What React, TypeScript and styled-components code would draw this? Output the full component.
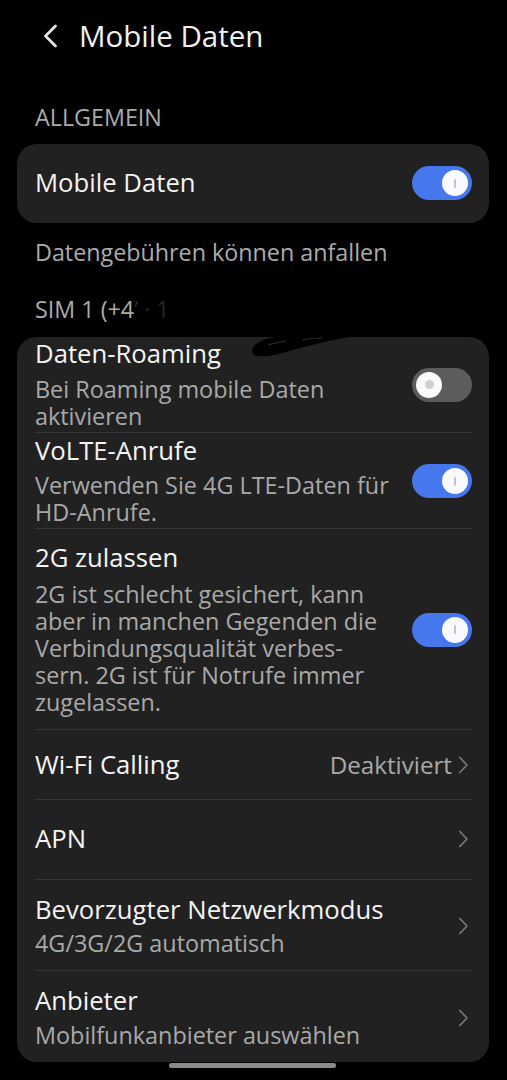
import styled, { createGlobalStyle } from "styled-components";

const GlobalStyle = createGlobalStyle`
  html, body {
    margin: 0;
    padding: 0;
    background: #000;
  }
  body {
    font-family: "Open Sans", "Noto Sans", sans-serif;
    -webkit-font-smoothing: antialiased;
  }
`;

const Page = styled.div`
  width: 507px;
  height: 1080px;
  box-sizing: border-box;
  padding: 0 18px 0 17px;
  background: #000;
  color: #f2f2f2;
  display: flex;
  flex-direction: column;
  overflow: hidden;
`;

const Header = styled.header`
  height: 72px;
  display: flex;
  align-items: center;
  gap: 20px;
  padding-left: 25px;
`;

const HeaderTitle = styled.h1`
  margin: 0;
  font-size: 29.5px;
  font-weight: 500;
  color: #f0f0f0;
  line-height: 1;
`;

const SectionLabel = styled.div<{ $top: number }>`
  margin-top: ${(p) => p.$top}px;
  padding-left: 18px;
  font-size: 23.3px;
  line-height: 30px;
  color: #ababab;
  position: relative;
`;

const Card = styled.section<{ $top: number }>`
  margin-top: ${(p) => p.$top}px;
  background: #212121;
  border-radius: 20px;
  padding: 0 17px 0 18px;
  display: flex;
  flex-direction: column;
`;

const Row = styled.div<{ $top: number; $bottom: number; $first?: boolean }>`
  display: flex;
  align-items: center;
  gap: 12px;
  padding: ${(p) => p.$top}px 0 ${(p) => p.$bottom}px;
  border-top: ${(p) => (p.$first ? "none" : "1px solid #363636")};
`;

const RowText = styled.div`
  flex: 1;
  min-width: 0;
  display: flex;
  flex-direction: column;
`;

const Title = styled.div`
  font-size: 25.7px;
  line-height: 30px;
  color: #f4f4f4;
  white-space: nowrap;
`;

const Sub = styled.div<{ $gap: number }>`
  margin-top: ${(p) => p.$gap}px;
  font-size: 23.4px;
  line-height: 27px;
  color: #a9a9a9;
  white-space: nowrap;
`;

const Value = styled.span`
  font-size: 24.2px;
  line-height: 30px;
  color: #a9a9a9;
`;

const Trailing = styled.div`
  display: flex;
  align-items: center;
  gap: 6px;
`;

const Track = styled.div<{ $on: boolean }>`
  width: 60px;
  height: 34px;
  box-sizing: border-box;
  border-radius: 17px;
  background: ${(p) => (p.$on ? "#4677ec" : "#5c5c5c")};
  display: flex;
  align-items: center;
  justify-content: ${(p) => (p.$on ? "flex-end" : "flex-start")};
  padding: 0 4px;
  flex-shrink: 0;
`;

const Thumb = styled.div`
  width: 26px;
  height: 26px;
  border-radius: 50%;
  background: #fafafa;
  display: grid;
  place-items: center;
`;

const OnMark = styled.div`
  width: 2px;
  height: 9px;
  border-radius: 1px;
  background: #b9c3dc;
`;

const OffMark = styled.div`
  width: 9px;
  height: 9px;
  border-radius: 50%;
  background: #cfcfcf;
`;

const Faint = styled.span`
  color: #262626;
`;

const Scribble = styled.svg`
  position: absolute;
  left: 233px;
  top: 30px;
  z-index: 2;
`;

const ChevronIcon = styled.svg`
  margin-right: 3px;
  flex-shrink: 0;
`;

const HomeBar = styled.div`
  align-self: center;
  margin: 1px 0 0 -1px;
  width: 167px;
  height: 5px;
  border-radius: 3px;
  background: #8a8a8a;
`;

const Toggle = ({ on }: { on: boolean }) => (
  <Track $on={on}>
    <Thumb>{on ? <OnMark /> : <OffMark />}</Thumb>
  </Track>
);

const Chevron = () => (
  <ChevronIcon width="11" height="18" viewBox="0 0 11 18">
    <path
      d="M1.8 1.5 L9 9 L1.8 16.5"
      fill="none"
      stroke="#7a7a7a"
      strokeWidth="1.7"
      strokeLinecap="round"
      strokeLinejoin="round"
    />
  </ChevronIcon>
);

const BackIcon = () => (
  <svg width="17" height="24" viewBox="0 0 17 24">
    <path
      d="M13.5 2 L3.5 12 L13.5 22"
      fill="none"
      stroke="#e6e6e6"
      strokeWidth="2.8"
      strokeLinecap="round"
      strokeLinejoin="round"
    />
  </svg>
);

const App = () => (
  <>
    <GlobalStyle />
    <Page>
      <Header>
        <BackIcon />
        <HeaderTitle>Mobile Daten</HeaderTitle>
      </Header>

      <SectionLabel $top={30}>ALLGEMEIN</SectionLabel>

      <Card $top={12}>
        <Row $first $top={22} $bottom={23}>
          <RowText>
            <Title>Mobile Daten</Title>
          </RowText>
          <Trailing>
            <Toggle on />
          </Trailing>
        </Row>
      </Card>

      <SectionLabel $top={14}>Datengebühren können anfallen</SectionLabel>

      <SectionLabel $top={27}>
        SIM 1 (+4<Faint>ʼ · 1</Faint>
        <Scribble width="110" height="36" viewBox="0 0 110 36">
          <path
            d="M3 30 C0 26 4 19 16 15 C40 9 70 7 104 6 L104 12 C80 16 50 24 28 30 C16 33 6 33 3 30 Z"
            fill="#000"
          />
          <path d="M18 21 C24 19 30 18 36 17" stroke="#2e2e2e" strokeWidth="1.2" fill="none" />
          <path d="M52 16 C58 15 64 14 72 14" stroke="#2e2e2e" strokeWidth="1.2" fill="none" />
        </Scribble>
      </SectionLabel>

      <Card $top={13}>
        <Row $first $top={2} $bottom={2}>
          <RowText>
            <Title>Daten-Roaming</Title>
            <Sub $gap={7}>
              Bei Roaming mobile Daten
              <br />
              aktivieren
            </Sub>
          </RowText>
          <Trailing>
            <Toggle on={false} />
          </Trailing>
        </Row>

        <Row $top={3} $bottom={2}>
          <RowText>
            <Title>VoLTE-Anrufe</Title>
            <Sub $gap={6}>
              Verwenden Sie 4G LTE-Daten für
              <br />
              HD-Anrufe.
            </Sub>
          </RowText>
          <Trailing>
            <Toggle on />
          </Trailing>
        </Row>

        <Row $top={14} $bottom={13}>
          <RowText>
            <Title>2G zulassen</Title>
            <Sub $gap={8}>
              2G ist schlecht gesichert, kann
              <br />
              aber in manchen Gegenden die
              <br />
              Verbindungsqualität verbes-
              <br />
              sern. 2G ist für Notrufe immer
              <br />
              zugelassen.
            </Sub>
          </RowText>
          <Trailing>
            <Toggle on />
          </Trailing>
        </Row>

        <Row $top={20} $bottom={19}>
          <RowText>
            <Title>Wi-Fi Calling</Title>
          </RowText>
          <Trailing>
            <Value>Deaktiviert</Value>
            <Chevron />
          </Trailing>
        </Row>

        <Row $top={24} $bottom={25}>
          <RowText>
            <Title>APN</Title>
          </RowText>
          <Trailing>
            <Chevron />
          </Trailing>
        </Row>

        <Row $top={15} $bottom={13}>
          <RowText>
            <Title>Bevorzugter Netzwerkmodus</Title>
            <Sub $gap={5}>4G/3G/2G automatisch</Sub>
          </RowText>
          <Trailing>
            <Chevron />
          </Trailing>
        </Row>

        <Row $top={15} $bottom={13}>
          <RowText>
            <Title>Anbieter</Title>
            <Sub $gap={6}>Mobilfunkanbieter auswählen</Sub>
          </RowText>
          <Trailing>
            <Chevron />
          </Trailing>
        </Row>
      </Card>

      <HomeBar />
    </Page>
  </>
);

export default App;
